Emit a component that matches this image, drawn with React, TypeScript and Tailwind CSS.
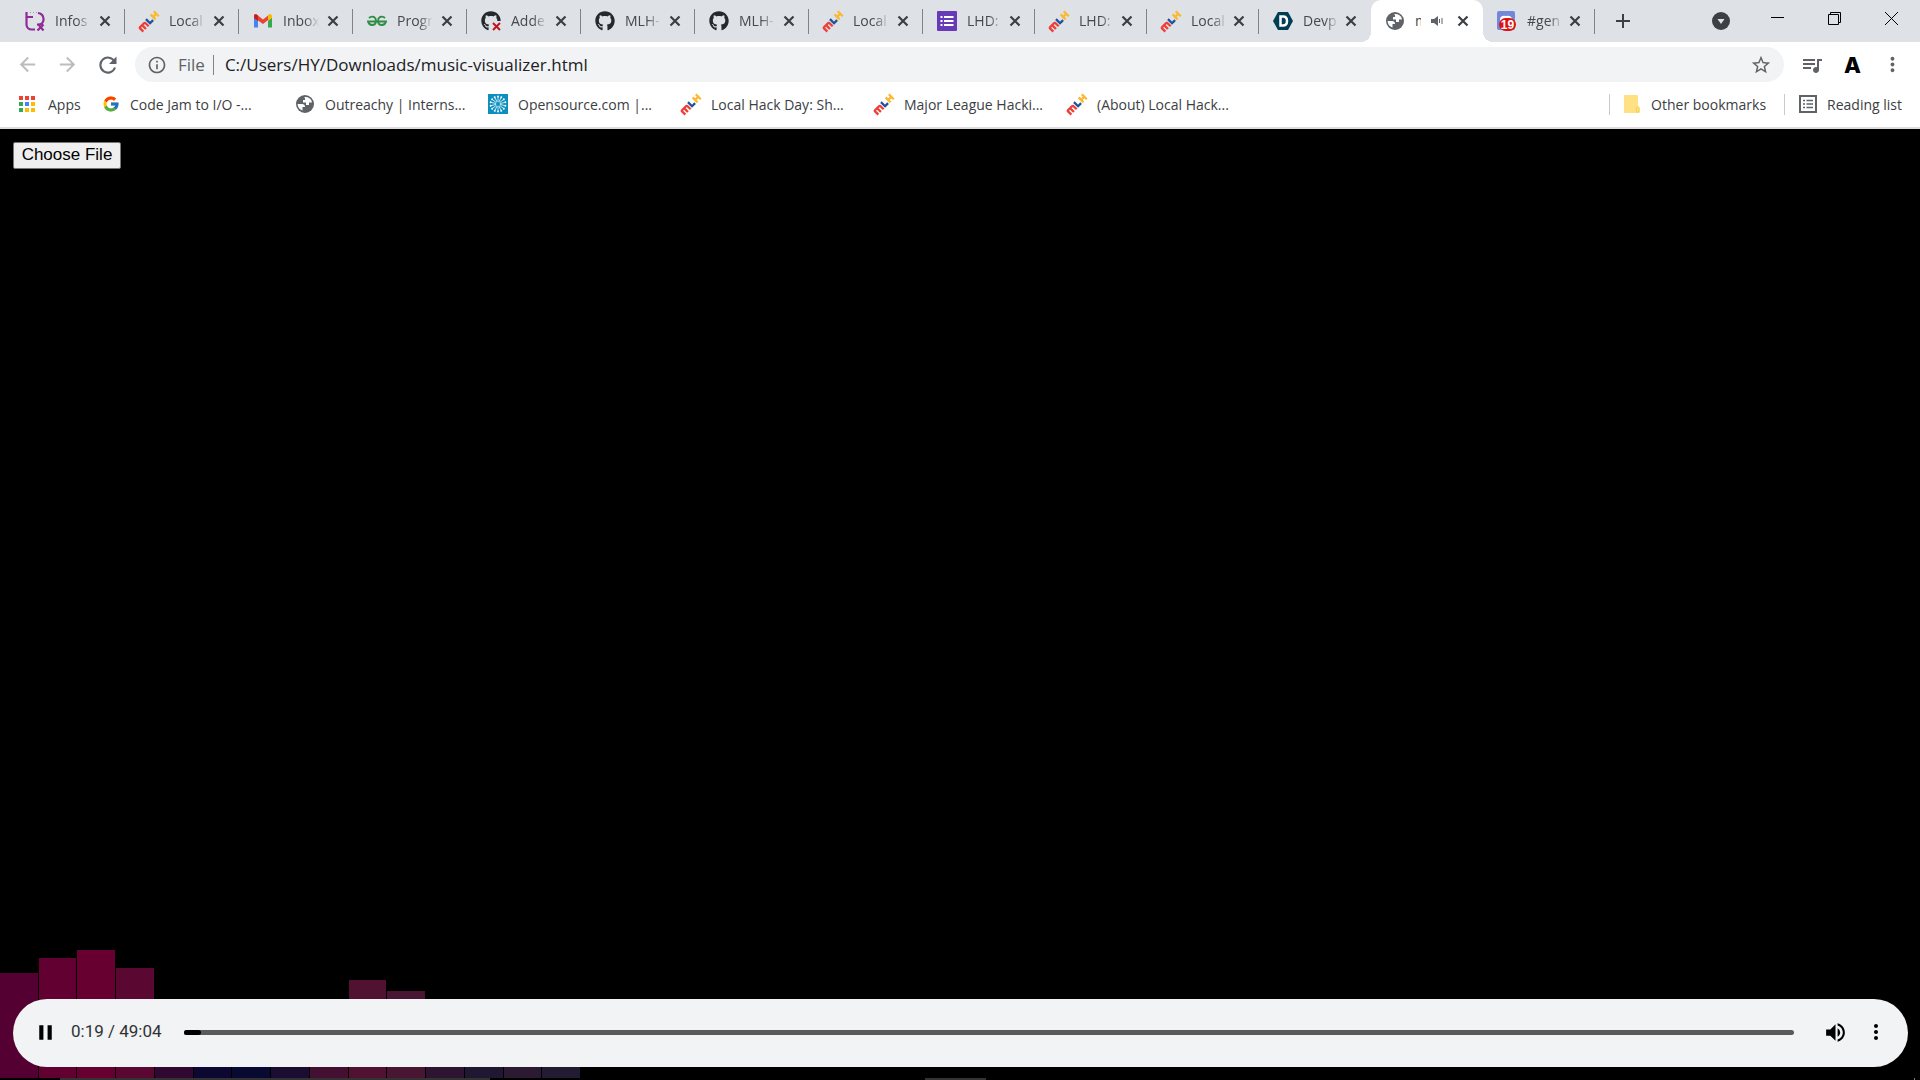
import { ReactNode } from 'react';
import { FaGithub } from 'react-icons/fa';
import { FcGoogle } from 'react-icons/fc';
import {
  MdArrowBack,
  MdArrowForward,
  MdInfoOutline,
  MdMoreVert,
  MdPause,
  MdQueueMusic,
  MdStarBorder,
  MdVolumeUp,
} from 'react-icons/md';

const MlhIcon = () => (
  <svg viewBox="0 0 20 20" className="h-5 w-5 overflow-visible" fill="none" strokeWidth="2.3">
    <g transform="rotate(-45 10 10)">
      <path d="M-1.500 13.500V8.500Q-1.500 8 -.5 8H4.500Q6 8 6 9.500V13.500M2.200 8V13.500" stroke="#ef3e36" />
      <path d="M9.200 6.500V12.300H13.500" stroke="#1d539f" />
      <path d="M15.800 6.500V13.500M20.300 6.500V13.500M15.800 10H20.300" stroke="#fbb92f" />
    </g>
  </svg>
);

const InfosysIcon = () => (
  <svg viewBox="0 0 20 20" className="h-5 w-5" fill="none" stroke="#8f2b96" strokeWidth="2.2">
    <path d="M1.500 1V14Q2 18.500 7 18.500H10M1.500 6H8M13 2Q19 3 18.500 9Q18 14 12 13.500M13 13L18.500 19.500M18.500 13.500L12.500 19.500" />
    <path d="M5 1.500H14" strokeWidth="1" strokeDasharray="1 2" opacity=".5" />
  </svg>
);

const GmailIcon = () => (
  <svg viewBox="0 0 20 20" className="h-5 w-5">
    <path d="M1 5V16.500H5V9Z" fill="#4285f4" />
    <path d="M19 5V16.500H15V9Z" fill="#34a853" />
    <path d="M1 5Q1 3 3 3L10 8.500L17 3V7.500L10 13L5 9.500V10L1 7Z" fill="#ea4335" />
    <path d="M15 4.500Q19 2 19 5V7L15 10Z" fill="#fbbc04" />
    <path d="M1 5Q1 2 5 4.500V10L1 7Z" fill="#c5221f" />
  </svg>
);

const GeeksIcon = () => (
  <svg viewBox="0 0 20 20" className="h-5 w-5" fill="none" stroke="#2f8d46" strokeWidth="1.9">
    <path d="M2 7Q4 5 7 6Q9 7 9 10Q9 14 5 14Q2 14 1 10.500H19Q18 14 15 14Q11 14 11 10Q11 7 13 6Q16 5 18 7" />
  </svg>
);

const GithubFailIcon = () => (
  <svg viewBox="0 0 20 20" className="h-5 w-5">
    <FaGithub size={20} color="#24292e" />
    <path d="M10 20V13Q10 10 13 10H20V20Z" fill="#dee1e6" />
    <path d="M12 12L19 19M19 12L12 19" stroke="#bd1622" strokeWidth="2" />
  </svg>
);

const GithubIcon = () => <FaGithub size={20} color="#24292e" />;

const FormsIcon = () => (
  <svg viewBox="0 0 20 20" className="h-5 w-5">
    <rect width="20" height="20" rx="1" fill="#673ab7" />
    <path
      d="M3.500 6H5.500M3.500 10H5.500M3.500 14H5.500M7 6H16.500M7 10H16.500M7 14H16.500"
      stroke="#fff"
      strokeWidth="2"
    />
  </svg>
);

const DevpostIcon = () => (
  <svg viewBox="0 0 20 20" className="h-5 w-5">
    <path d="M5 1H15L20 10L15 19H5L0 10Z" fill="#003e54" />
    <path
      d="M7.500 5.500V14.500H10Q14 14.500 14 10Q14 5.500 10 5.500Z"
      fill="none"
      stroke="#fff"
      strokeWidth="2.5"
    />
  </svg>
);

const GlobeIcon = () => (
  <svg viewBox="0 0 20 20" className="h-5 w-5">
    <circle cx="10" cy="10" r="9" fill="#5f6368" />
    <path
      d="M2.500 10H7Q10 10 10 13H7.500V16.500Q3 15 2.500 10ZM9 3Q16 2.500 17 8.500H14V11H11V8.500H8V6H10V4Z"
      fill="#fff"
    />
  </svg>
);

const DiscordIcon = () => (
  <svg viewBox="0 0 20 20" className="h-5 w-5">
    <rect width="18" height="19" rx="2" fill="#7289da" />
    <path d="M3 8Q4 4 9 5Q14 4 15 8V11H3Z" fill="#fff" />
    <rect x="2" y="7" width="17" height="13" rx="6.5" fill="#e01010" />
    <text
      x="10.500"
      y="17.500"
      textAnchor="middle"
      fontSize="12"
      fontWeight="700"
      fill="#fff"
      fontFamily="Liberation Sans, sans-serif"
    >
      19
    </text>
  </svg>
);

const appColors = [
  '#ea4335', '#ea4335', '#ea4335',
  '#34a853', '#4285f4', '#fbbc04',
  '#34a853', '#fbbc04', '#fbbc04',
];

const AppsIcon = () => (
  <svg viewBox="0 0 17 17" className="h-[17px] w-[17px]">
    {appColors.map((color, i) => (
      <rect key={i} x={(i % 3) * 6} y={Math.floor(i / 3) * 6} width="4" height="4" fill={color} />
    ))}
  </svg>
);

const OpensourceIcon = () => (
  <svg viewBox="0 0 20 20" className="h-5 w-5">
    <rect width="20" height="20" fill="#0b8fbf" />
    {Array.from({ length: 14 }, (_, i) => (
      <g key={i} transform={`rotate(${i * 25.714} 10 10)`}>
        <path d="M10 8V3" stroke="#fff" strokeWidth=".7" />
        <circle cx="10" cy="2.5" r="1" fill="#fff" />
      </g>
    ))}
  </svg>
);

const FolderIcon = () => (
  <svg viewBox="0 0 17 20" className="h-5 w-[17px]">
    <path d="M1 1H13Q14 1 14 2V12Q16.500 13 15.500 19H1Q0 19 0 18V2Q0 1 1 1Z" fill="#ffe082" />
    <path d="M12.500 18V14Q13 12 15 13.500V18H12.500" fill="none" stroke="#f8cf54" />
  </svg>
);

const ReadingIcon = () => (
  <svg viewBox="0 0 18 18" className="h-[18px] w-[18px]" fill="none" stroke="#5f6368" strokeWidth="2">
    <rect x="1" y="1" width="16" height="16" />
    <path d="M4 5.500H6M4 9H6M4 12.500H6M7.500 5.500H14M7.500 9H14M7.500 12.500H14" strokeWidth="1.5" />
  </svg>
);

const CloseIcon = () => (
  <svg viewBox="0 0 12 12" className="h-3 w-3" stroke="#3c4043" strokeWidth="2.2">
    <path d="M1.500 1.500L10.500 10.500M10.500 1.500L1.500 10.500" />
  </svg>
);

const ReloadIcon = () => (
  <svg viewBox="0 0 18 18" className="h-[18px] w-[18px]">
    <path d="M15.500 5.500A7.500 7.500 0 1 0 16 11.500" fill="none" stroke="#5f6368" strokeWidth="2.1" />
    <path d="M17.500 .5V8H10Z" fill="#5f6368" />
  </svg>
);

const SpeakerIcon = () => (
  <svg viewBox="0 0 12 12" className="h-3 w-3" fill="#5f6368">
    <path d="M0 4H3L7 1V11L3 8H0Z" />
    <path d="M8.500 4V8M11 3V9" stroke="#5f6368" />
  </svg>
);

interface TabProps {
  title: string;
  icon: ReactNode;
  width?: string;
  active?: boolean;
  separator?: boolean;
}

const tabs: TabProps[] = [
  { title: 'Infos', icon: <InfosysIcon /> },
  { title: 'Local', icon: <MlhIcon /> },
  { title: 'Inbox', icon: <GmailIcon /> },
  { title: 'Progr', icon: <GeeksIcon /> },
  { title: 'Adde', icon: <GithubFailIcon /> },
  { title: 'MLH-', icon: <GithubIcon /> },
  { title: 'MLH-', icon: <GithubIcon /> },
  { title: 'Local', icon: <MlhIcon /> },
  { title: 'LHD:', icon: <FormsIcon />, width: 'w-28' },
  { title: 'LHD:', icon: <MlhIcon />, width: 'w-28' },
  { title: 'Local', icon: <MlhIcon />, width: 'w-28' },
  { title: 'Devp', icon: <DevpostIcon />, width: 'w-28', separator: false },
  { title: 'm', icon: <GlobeIcon />, width: 'w-28', active: true, separator: false },
  { title: '#gen', icon: <DiscordIcon />, width: 'w-28' },
];

const bookmarks = [
  { title: 'Code Jam to I/O -...', icon: <FcGoogle size={18} /> },
  { title: 'Outreachy | Interns...', icon: <GlobeIcon /> },
  { title: 'Opensource.com |...', icon: <OpensourceIcon /> },
  { title: 'Local Hack Day: Sh...', icon: <MlhIcon /> },
  { title: 'Major League Hacki...', icon: <MlhIcon /> },
  { title: '(About) Local Hack...', icon: <MlhIcon /> },
];

const bars = [
  { height: 105, color: 'bg-[#550032]' },
  { height: 120, color: 'bg-[#610031]' },
  { height: 128, color: 'bg-[#670031]' },
  { height: 110, color: 'bg-[#5a0832]' },
  { height: 60, color: 'bg-[#300832]' },
  { height: 40, color: 'bg-[#0d0832]' },
  { height: 40, color: 'bg-[#080a32]' },
  { height: 45, color: 'bg-[#1b0d32]' },
  { height: 75, color: 'bg-[#431032]' },
  { height: 98, color: 'bg-[#511232]' },
  { height: 87, color: 'bg-[#481532]' },
  { height: 60, color: 'bg-[#2d1532]' },
  { height: 50, color: 'bg-[#201832]' },
  { height: 55, color: 'bg-[#2b1a32]' },
  { height: 50, color: 'bg-[#231b32]' },
];

const Tab = ({ title, icon, width = 'w-[114px]', active, separator = true }: TabProps) => (
  <div
    className={`relative flex h-full min-w-0 items-center pr-3.5 pl-3.5 ${width} ${
      active ? 'rounded-t-[10px] bg-white' : ''
    }`}
  >
    {active && (
      <>
        <span className="absolute bottom-0 -left-2.5 h-2.5 w-2.5 bg-[radial-gradient(circle_at_0_0,transparent_10px,white_10px)]" />
        <span className="absolute -right-2.5 bottom-0 h-2.5 w-2.5 bg-[radial-gradient(circle_at_100%_0,transparent_10px,white_10px)]" />
      </>
    )}
    <span className="shrink-0">{icon}</span>
    <span
      className={
        active
          ? 'ml-2.5 w-1.5 overflow-hidden pb-0.5 whitespace-nowrap'
          : 'ml-2.5 w-9 overflow-hidden mask-r-from-60% pb-0.5 whitespace-nowrap'
      }
    >
      {title}
    </span>
    {active && (
      <span className="ml-2.5 shrink-0">
        <SpeakerIcon />
      </span>
    )}
    <button aria-label={`Close ${title}`} className="ml-auto shrink-0">
      <CloseIcon />
    </button>
    {separator && <span className="absolute top-[9px] right-0 h-[25px] w-px bg-[#808387]" />}
  </div>
);

const TabStrip = () => (
  <div className="flex h-[42px] items-center bg-[#dee1e6] pl-[11px] text-[14px] text-[#45484c]">
    <div className="flex h-full shrink">
      {tabs.map((tab, i) => (
        <Tab key={i} {...tab} />
      ))}
    </div>
    <button aria-label="New tab" className="ml-5">
      <svg viewBox="0 0 16 16" className="h-4 w-4" stroke="#3c4043" strokeWidth="2">
        <path d="M8 1V15M1 8H15" />
      </svg>
    </button>
    <button aria-label="Search tabs" className="ml-auto">
      <svg viewBox="0 0 18 18" className="h-[18px] w-[18px]">
        <circle cx="9" cy="9" r="9" fill="#3c4043" />
        <path d="M5.500 7H12.500L9 12Z" fill="#dee1e6" />
      </svg>
    </button>
    <div className="flex w-[190px] justify-between pr-[22px] pb-1.5 pl-[41px]">
      <button aria-label="Minimize">
        <svg viewBox="0 0 13 13" className="h-[13px] w-[13px]" stroke="#000">
          <path d="M0 5.500H13" />
        </svg>
      </button>
      <button aria-label="Restore">
        <svg viewBox="0 0 13 13" className="h-[13px] w-[13px]" fill="none" stroke="#000">
          <path d="M.5 2.500H10.500V12.500H.5ZM2.500 2.500V.5H12.500V10.500H10.500" />
        </svg>
      </button>
      <button aria-label="Close window">
        <svg viewBox="0 0 13 13" className="h-[13px] w-[13px]" stroke="#000">
          <path d="M0 0L13 13M13 0L0 13" />
        </svg>
      </button>
    </div>
  </div>
);

const Toolbar = () => (
  <div className="flex h-[45px] items-center bg-white px-4 text-[#5f6368]">
    <button aria-label="Back" className="text-[#babcbe]">
      <MdArrowBack size={23} />
    </button>
    <button aria-label="Forward" className="ml-[17px] text-[#babcbe]">
      <MdArrowForward size={23} />
    </button>
    <button aria-label="Reload" className="ml-5">
      <ReloadIcon />
    </button>
    <div className="ml-[18px] flex h-[35px] flex-1 items-center rounded-full bg-[#f1f3f4] px-3">
      <MdInfoOutline size={20} />
      <span className="ml-[11px] text-[17px]">File</span>
      <span className="ml-2 h-5 w-px bg-[#808387]" />
      <input
        aria-label="Address"
        defaultValue="C:/Users/HY/Downloads/music-visualizer.html"
        className="ml-[11px] flex-1 bg-transparent text-[17px] text-[#202124] outline-none"
      />
      <button aria-label="Bookmark this page">
        <MdStarBorder size={22} />
      </button>
    </div>
    <button aria-label="Media controls" className="ml-4">
      <MdQueueMusic size={24} />
    </button>
    <button
      aria-label="Extension"
      className="ml-5 font-[Inter] text-[22px] leading-6 font-extrabold text-black"
    >
      A
    </button>
    <button aria-label="Menu" className="ml-5">
      <MdMoreVert size={23} />
    </button>
  </div>
);

const BookmarksBar = () => (
  <div className="flex h-[42px] items-center border-b-2 border-[#dadce0] bg-white pr-[18px] pb-1.5 pl-[19px] text-[14px] text-[#3c4043]">
    <a href="#apps" className="flex w-[83px] items-center gap-3">
      <AppsIcon />
      Apps
    </a>
    {bookmarks.map((bookmark) => (
      <a
        key={bookmark.title}
        href="#bookmark"
        className="flex w-[193px] items-center gap-2.5 whitespace-nowrap"
      >
        {bookmark.icon}
        {bookmark.title}
      </a>
    ))}
    <a href="#other" className="ml-auto flex items-center gap-2.5 border-l border-[#c8cacd] pl-3.5">
      <FolderIcon />
      Other bookmarks
    </a>
    <a
      href="#reading"
      className="ml-[18px] flex items-center gap-2.5 border-l border-[#c8cacd] pl-3.5"
    >
      <ReadingIcon />
      Reading list
    </a>
  </div>
);

const Visualizer = () => (
  <div className="absolute bottom-0.5 left-0 grid w-[580px] grid-cols-15 items-end gap-px">
    {bars.map((bar, i) => (
      <div key={i} className={bar.color} style={{ height: bar.height }} />
    ))}
  </div>
);

const Player = () => (
  <div className="relative mr-3 mb-[13px] ml-[13px] flex h-[68px] items-center rounded-full bg-[#f1f3f4] pr-5 pb-0.5 pl-5 text-black">
    <button aria-label="Pause">
      <MdPause size={25} />
    </button>
    <span className="ml-[13px] w-[101px] font-[Roboto] text-[17px] text-[#303234]">
      0:19 / 49:04
    </span>
    <div className="ml-3 h-[5px] flex-1 rounded-full bg-[#5a5a5a]">
      <div className="h-[5px] w-[17px] rounded-full bg-black" />
    </div>
    <button aria-label="Mute" className="ml-[29px]">
      <MdVolumeUp size={25} />
    </button>
    <button aria-label="More options" className="ml-4">
      <MdMoreVert size={24} />
    </button>
  </div>
);

const App = () => (
  <div className="flex h-screen flex-col overflow-hidden bg-black font-['Open_Sans',sans-serif]">
    <header>
      <TabStrip />
      <Toolbar />
      <BookmarksBar />
    </header>
    <main className="relative flex flex-1 flex-col justify-between">
      <div className="p-[13px]">
        <button className="block h-[27px] w-[108px] rounded-[2px] border border-[#767676] bg-[#efefef] pb-0.5 font-['Liberation_Sans',sans-serif] text-[17px] leading-6 text-black">
          Choose File
        </button>
      </div>
      <Visualizer />
      <Player />
      <div className="absolute bottom-0 left-[60px] h-0.5 w-[430px] bg-[#333]" />
      <div className="absolute bottom-0 left-[925px] h-0.5 w-[61px] bg-[#333]" />
      <div className="absolute right-[5px] bottom-0 h-0.5 w-px bg-[#777]" />
    </main>
  </div>
);

export default App;
